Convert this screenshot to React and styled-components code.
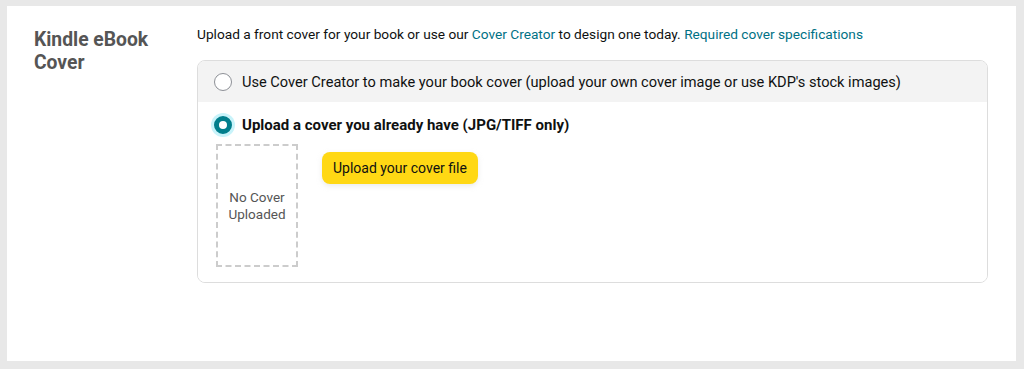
import React from 'react'
import styled, { createGlobalStyle } from 'styled-components'

const GlobalStyle = createGlobalStyle`
  body {
    margin: 0;
    background: #e8e8e8;
    font-family: Roboto, "Liberation Sans", sans-serif;
    color: #0f1111;
  }
`

function App() {
    return (
        <>
            <GlobalStyle />
            <Panel>
                <Title>Kindle eBook Cover</Title>
                <Content>
                    <Intro>
                        Upload a front cover for your book or use our <Link>Cover Creator</Link> to design one today.{' '}
                        <Link>Required cover specifications</Link>
                    </Intro>
                    <Card>
                        <OptionRow muted>
                            <Option>
                                <Radio />
                                <Label>Use Cover Creator to make your book cover (upload your own cover image or use KDP's stock images)</Label>
                            </Option>
                        </OptionRow>
                        <OptionRow>
                            <Option>
                                <Radio checked />
                                <Label bold>Upload a cover you already have (JPG/TIFF only)</Label>
                            </Option>
                            <UploadArea>
                                <Placeholder>No Cover<br />Uploaded</Placeholder>
                                <UploadButton>Upload your cover file</UploadButton>
                            </UploadArea>
                        </OptionRow>
                    </Card>
                </Content>
            </Panel>
        </>
    )
}

export default App;

const Panel = styled.div`
    background: white;
    margin: 6px 8px 0 7px;
    height: 355px;
    box-sizing: border-box;
    padding: 18px 28px 0 27px;
    display: grid;
    grid-template-columns: 163px 1fr;
`
const Title = styled.h2`
    margin: 0;
    padding-top: 4px;
    width: 130px;
    font-size: 19.3px;
    line-height: 23px;
    font-weight: 700;
    color: #555;
`
const Content = styled.div`
    display: flex;
    flex-direction: column;
`
const Intro = styled.p`
    margin: 0;
    font-size: 13.7px;
    line-height: 20px;
`
const Link = styled.a`
    color: #007185;
    cursor: pointer;
`
const Card = styled.div`
    margin-top: 16px;
    border: 1px solid #dddddd;
    border-radius: 8px;
    overflow: hidden;
`
const OptionRow = styled.div`
    background: ${p => (p.muted ? '#f3f3f3' : 'white')};
    padding: ${p => (p.muted ? '10px 16px 9px' : '12px 16px 15px 18px')};
`
const Option = styled.div`
    display: flex;
    align-items: center;
    gap: 10px;
    height: 22px;
    margin-left: ${p => (p.indent ? '0' : '0')};
`
const Radio = styled.span`
    width: 18px;
    height: 18px;
    border-radius: 50%;
    box-sizing: border-box;
    flex-shrink: 0;
    margin-left: ${p => (p.checked ? '-2px' : '0')};
    background: white;
    border: ${p => (p.checked ? '5px solid #017e8c' : '1px solid #8d9096')};
    box-shadow: ${p => (p.checked ? '0 0 0 3px #c8f3fa' : 'none')};
`
const Label = styled.span`
    font-size: ${p => (p.bold ? '15px' : '14.6px')};
    font-weight: ${p => (p.bold ? 700 : 400)};
`
const UploadArea = styled.div`
    display: flex;
    align-items: flex-start;
    gap: 24px;
    margin-top: 8px;
`
const Placeholder = styled.div`
    width: 82px;
    height: 123px;
    box-sizing: border-box;
    border: 2px dashed #cccccc;
    display: flex;
    align-items: center;
    justify-content: center;
    text-align: center;
    font-size: 13.5px;
    line-height: 17px;
    color: #555;
`
const UploadButton = styled.button`
    margin-top: 8px;
    height: 32px;
    padding: 0 11px;
    border: none;
    border-radius: 8px;
    background: #ffd814;
    color: #0f1111;
    font-family: inherit;
    font-size: 14px;
    box-shadow: 0 2px 5px rgba(213, 217, 217, 0.5);
    cursor: pointer;
`
